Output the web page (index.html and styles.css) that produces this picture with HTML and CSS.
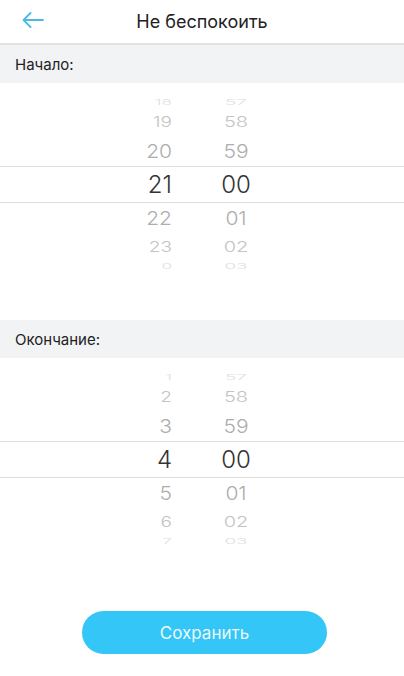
FILE: index.html
```html
<!DOCTYPE html>
<html lang="ru">
<head>
<meta charset="utf-8">
<title>Не беспокоить</title>
<link rel="stylesheet" href="styles.css">
</head>
<body>
<div class="app">
  <header class="topbar">
    <button class="back" aria-label="Назад">
      <svg width="22" height="16" viewBox="0 0 22 16"><path d="M1.5 8H21M8.5 1L1.5 8L8.5 15" fill="none" stroke="#4db9e8" stroke-width="1.8" stroke-linecap="round" stroke-linejoin="round"/></svg>
    </button>
    <h1 class="title">Не беспокоить</h1>
  </header>

  <div class="section-label">Начало:</div>
  <div class="picker">
    <div class="row r3"><span class="h">18</span><span class="m">57</span></div>
    <div class="row r2"><span class="h">19</span><span class="m">58</span></div>
    <div class="row r1"><span class="h">20</span><span class="m">59</span></div>
    <div class="row sel"><span class="h">21</span><span class="m">00</span></div>
    <div class="row r1"><span class="h">22</span><span class="m">01</span></div>
    <div class="row r2"><span class="h">23</span><span class="m">02</span></div>
    <div class="row r3"><span class="h">0</span><span class="m">03</span></div>
  </div>

  <div class="section-label">Окончание:</div>
  <div class="picker">
    <div class="row r3"><span class="h">1</span><span class="m">57</span></div>
    <div class="row r2"><span class="h">2</span><span class="m">58</span></div>
    <div class="row r1"><span class="h">3</span><span class="m">59</span></div>
    <div class="row sel"><span class="h">4</span><span class="m">00</span></div>
    <div class="row r1"><span class="h">5</span><span class="m">01</span></div>
    <div class="row r2"><span class="h">6</span><span class="m">02</span></div>
    <div class="row r3"><span class="h">7</span><span class="m">03</span></div>
  </div>

  <div class="actions">
    <button class="save">Сохранить</button>
  </div>
</div>
</body>
</html>
```

FILE: styles.css
```css
* { box-sizing: border-box; }
html, body { margin: 0; padding: 0; background: #fff; }
body { font-family: Inter, Roboto, "Noto Sans", sans-serif; color: #222; }

.app { width: 404px; }

.topbar {
  position: relative;
  height: 45px;
  border-bottom: 2px solid #e2e2e4;
  display: flex;
  align-items: center;
  justify-content: center;
}
.back {
  position: absolute;
  left: 22px;
  top: 12px;
  border: 0;
  background: none;
  padding: 0;
  width: 22px;
  height: 16px;
  display: flex;
}
.title {
  margin: 0;
  font-size: 18px;
  font-weight: 400;
  color: #222;
}

.section-label {
  height: 38px;
  background: #f2f3f5;
  padding-left: 15px;
  display: flex;
  align-items: center;
  font-size: 15px;
  color: #222;
}

.picker {
  height: 237px;
  padding-top: 14px;
  display: flex;
  flex-direction: column;
  font-weight: 300;
}
.row {
  display: flex;
  align-items: center;
  padding-left: 128px;
}
.row .h, .row .m { display: block; }
.row .h { width: 44px; text-align: right; transform-origin: right center; }
.row .m { width: 40px; margin-left: 44px; text-align: center; transform-origin: center center; }

.r3 { height: 11px; font-size: 19px; color: #dedede; }
.r3 span { transform: scaleY(0.4); }
.r3 .h { transform: scale(0.9, 0.4); }
.r2 { height: 28px; font-size: 20px; color: #c3c3c3; }
.r2 span { transform: scaleY(0.72); }
.r2 .h { transform: scale(0.95, 0.72); }
.r1 { height: 30px; font-size: 21px; color: #adadad; }
.r1 span { transform: scaleY(0.92); }
.sel {
  height: 37px;
  font-size: 24px;
  color: #333;
  border-top: 1px solid #dedede;
  border-bottom: 1px solid #dedede;
}

.actions {
  padding-top: 16px;
  padding-left: 82px;
}
.save {
  width: 245px;
  height: 43px;
  border: 0;
  border-radius: 22px;
  background: #33c6f6;
  color: #eef9fe;
  font-family: Inter, Roboto, sans-serif;
  font-size: 17px;
}
```
